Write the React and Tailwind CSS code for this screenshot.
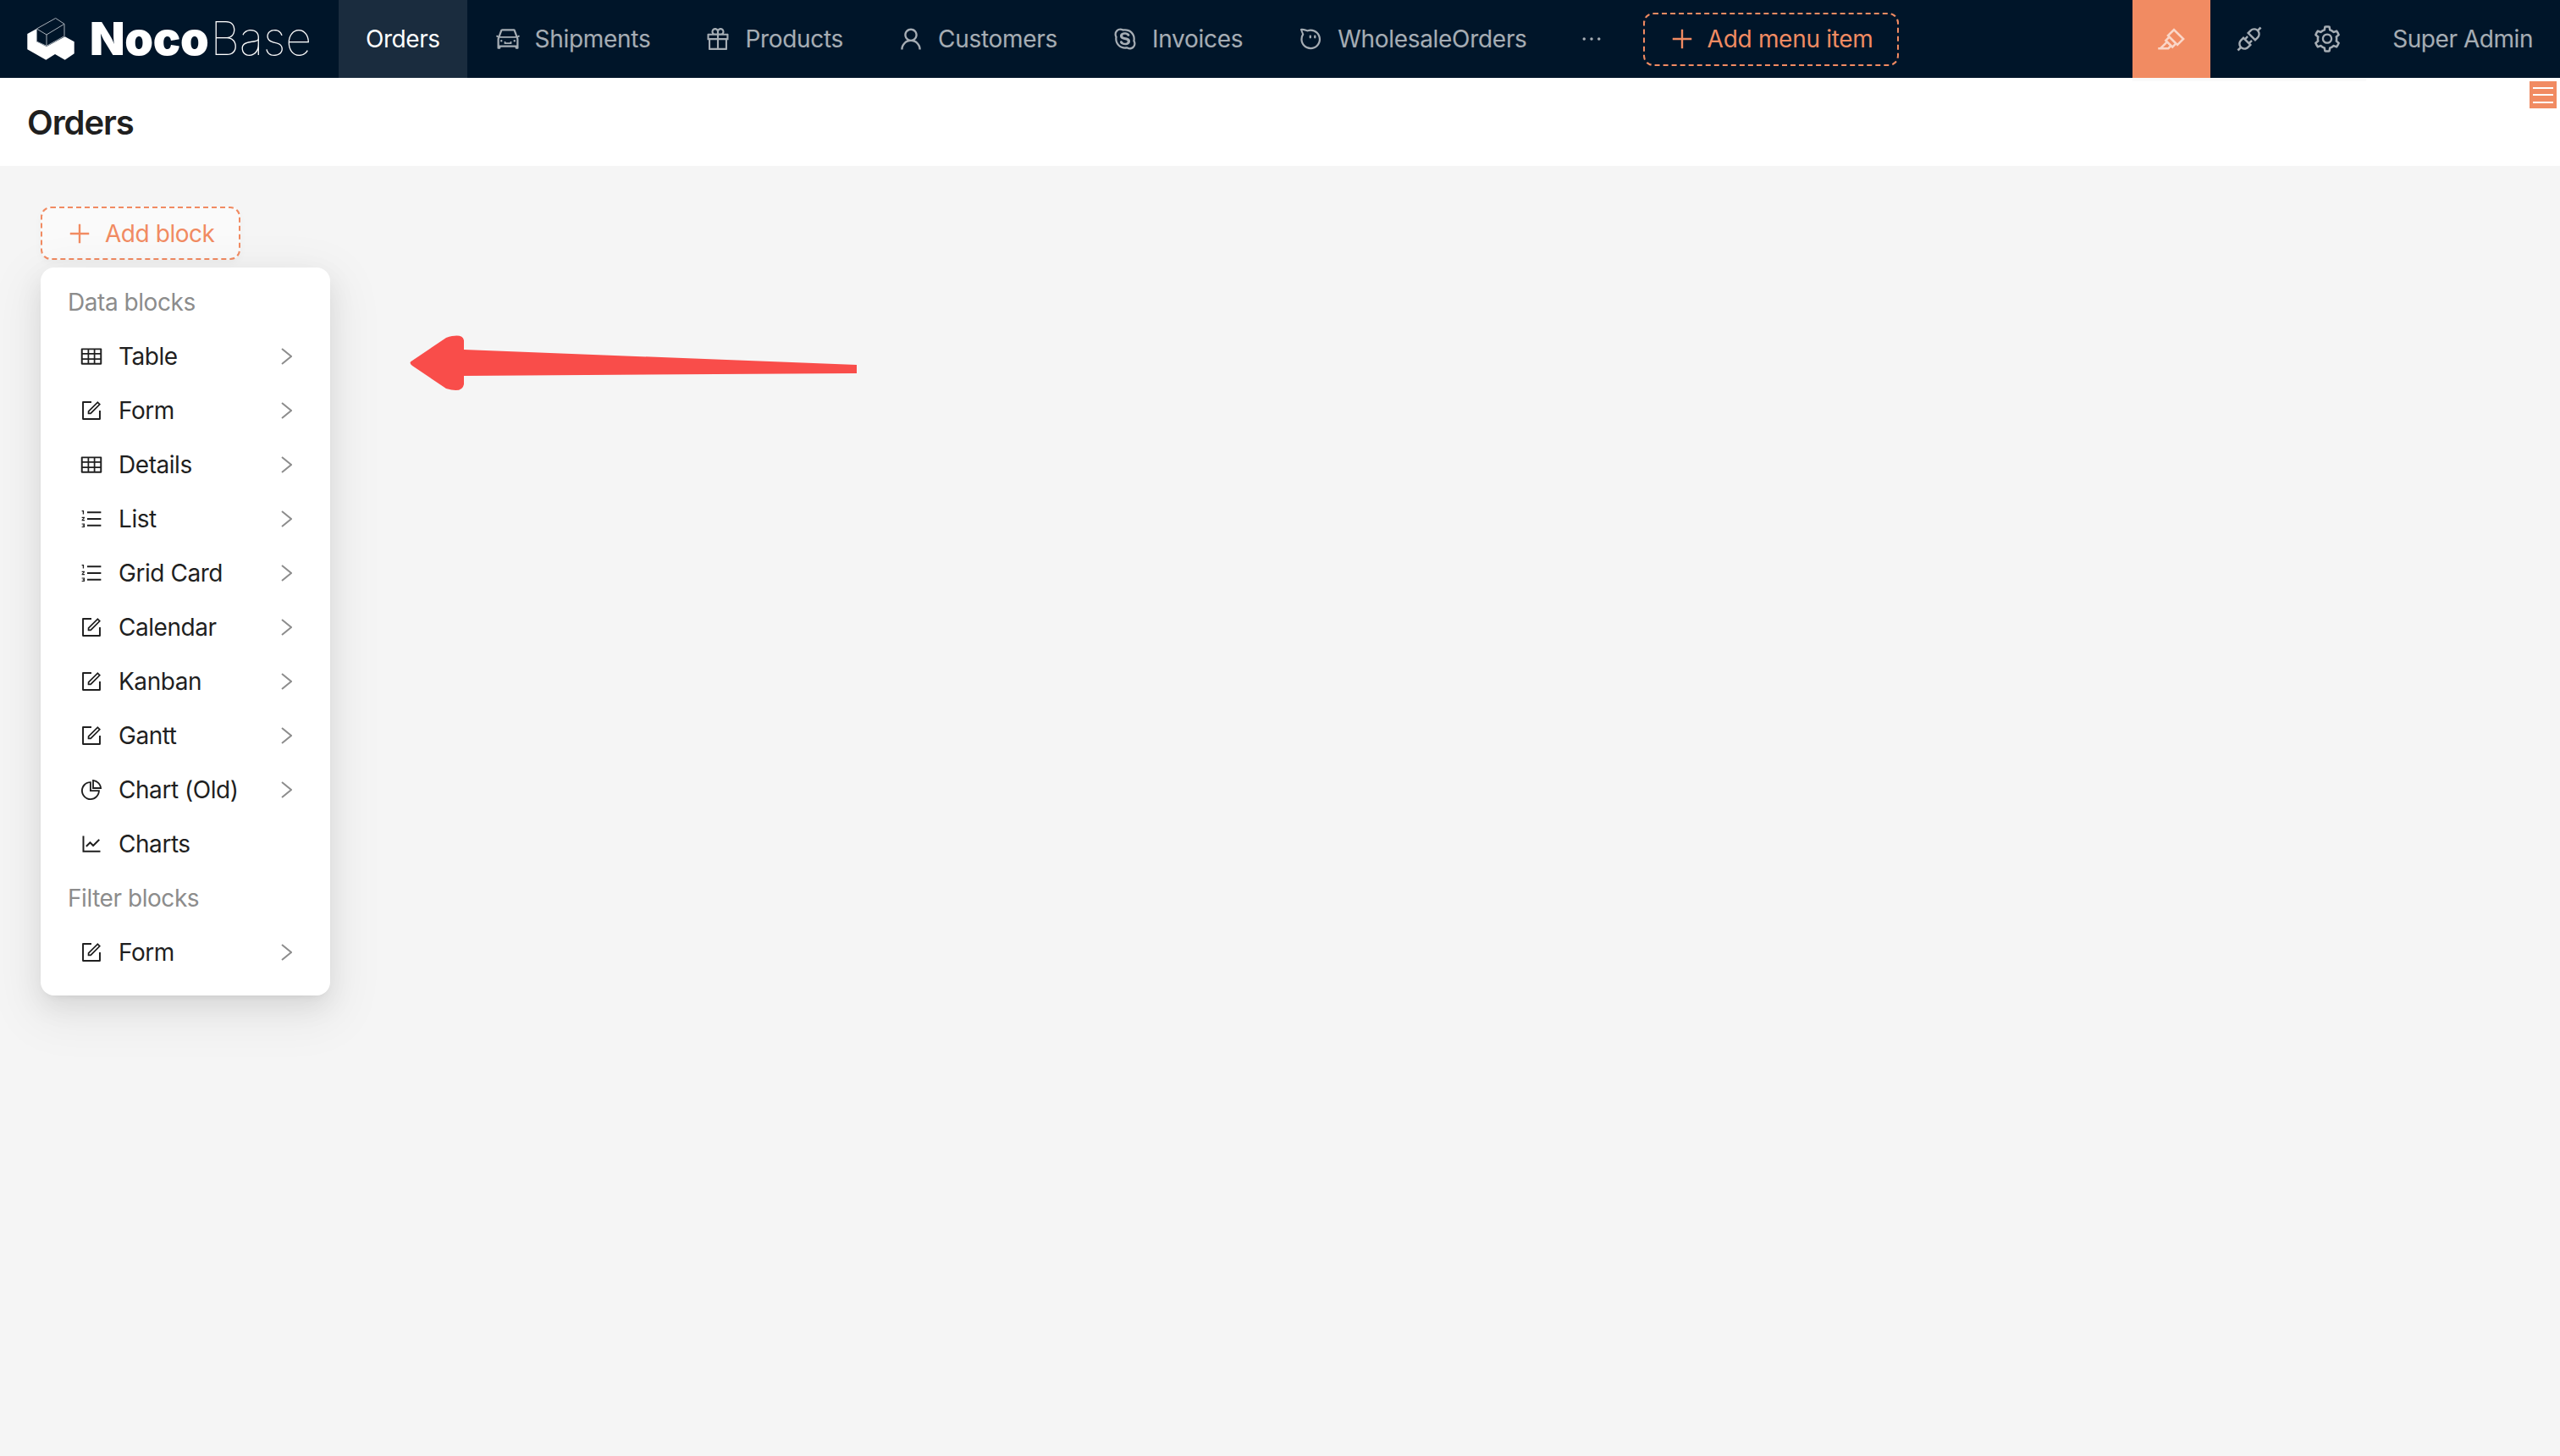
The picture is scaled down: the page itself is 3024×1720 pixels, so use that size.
import {
  AiOutlineApi,
  AiOutlineAliwangwang,
  AiOutlineCar,
  AiOutlineEllipsis,
  AiOutlineForm,
  AiOutlineGift,
  AiOutlineHighlight,
  AiOutlineLineChart,
  AiOutlineOrderedList,
  AiOutlinePieChart,
  AiOutlinePlus,
  AiOutlineSetting,
  AiOutlineSkype,
  AiOutlineTable,
  AiOutlineUser,
} from "react-icons/ai";

const navItems = [
  { label: "Shipments", icon: AiOutlineCar },
  { label: "Products", icon: AiOutlineGift },
  { label: "Customers", icon: AiOutlineUser },
  { label: "Invoices", icon: AiOutlineSkype },
  { label: "WholesaleOrders", icon: AiOutlineAliwangwang },
];

const dataBlocks = [
  { label: "Table", icon: AiOutlineTable, arrow: true },
  { label: "Form", icon: AiOutlineForm, arrow: true },
  { label: "Details", icon: AiOutlineTable, arrow: true },
  { label: "List", icon: AiOutlineOrderedList, arrow: true },
  { label: "Grid Card", icon: AiOutlineOrderedList, arrow: true },
  { label: "Calendar", icon: AiOutlineForm, arrow: true },
  { label: "Kanban", icon: AiOutlineForm, arrow: true },
  { label: "Gantt", icon: AiOutlineForm, arrow: true },
  { label: "Chart (Old)", icon: AiOutlinePieChart, arrow: true },
  { label: "Charts", icon: AiOutlineLineChart, arrow: false },
];

function Logo() {
  return (
    <div className="flex items-center w-[400px] pl-8 shrink-0">
      <svg width="56" height="50" viewBox="0 0 56 50" className="shrink-0">
        <path
          d="M0.3 19 L11.3 13 L11.3 28 L23 34 L44.7 22.3 L55.7 28.3 L55.7 42.3 L44.7 49.7 L33 43 L22.3 49.7 L0.3 37.3 Z"
          fill="#fff"
        />
        <path
          d="M11.3 13 L33.7 0.5 L44 7.3 L44 21.7 L23 33.3 L23 20 L11.3 13 L11.3 28 L23 33.3 M23 20 L44 7.3"
          fill="#001529"
          stroke="#a8b0b8"
          strokeWidth="1"
        />
      </svg>
      <div className="ml-[18px] flex items-baseline text-[54px] leading-none text-white">
        <span className="font-black">Noco</span>
        <span className="ml-[2px] font-thin tracking-[-0.25px]">Base</span>
      </div>
    </div>
  );
}

function TopBar() {
  return (
    <header className="flex items-center h-[92px] bg-[#001529] text-[28px] tracking-[-0.3px] text-white/65 shrink-0">
      <Logo />
      <div className="flex items-center h-full px-8 bg-[#1a2c3e] text-white tracking-[-0.45px]">Orders</div>
      {navItems.map(item => {
        const Icon = item.icon;
        return (
          <div key={item.label} className="flex items-center h-full px-8 gap-4">
            <Icon size={32} />
            <span>{item.label}</span>
          </div>
        );
      })}
      <div className="flex items-center h-full pl-7 pr-8">
        <AiOutlineEllipsis size={32} />
      </div>
      <button className="flex items-center h-[63px] ml-[13px] pl-7 pr-7 gap-[14px] border-2 border-dashed border-[#f18b62] rounded-xl text-[#f18b62]">
        <AiOutlinePlus size={32} />
        Add menu item
      </button>
      <div className="flex items-center h-full ml-auto">
        <div className="flex items-center justify-center w-[92px] h-full bg-[#f18b62] text-white/65">
          <AiOutlineHighlight size={36} />
        </div>
        <div className="flex items-center justify-center w-[92px] h-full">
          <AiOutlineApi size={36} />
        </div>
        <div className="flex items-center justify-center w-[92px] h-full">
          <AiOutlineSetting size={36} />
        </div>
        <span className="pl-[31px] pr-8 tracking-[-0.45px]">Super Admin</span>
      </div>
    </header>
  );
}

function GroupTitle({ children }) {
  return <div className="flex items-center h-16 pl-8 text-[#8c8c8c]">{children}</div>;
}

function MenuRow({ item }) {
  const Icon = item.icon;
  return (
    <div className="flex items-center h-16 pl-[46px] pr-[45px] gap-[18px] text-[#1f1f1f]">
      <Icon size={28} />
      <span>{item.label}</span>
      {item.arrow && (
        <svg width="13" height="20" viewBox="0 0 13 20" className="ml-auto" fill="none" stroke="#8c8c8c" strokeWidth="2">
          <path d="M1 1 L12 10 L1 19" />
        </svg>
      )}
    </div>
  );
}

export default function App() {
  return (
    <div className="relative flex flex-col min-h-screen bg-[#f5f5f5] font-['Inter',sans-serif] antialiased">
      <TopBar />
      <div className="flex items-center h-[104px] px-8 pt-[2px] bg-white shrink-0">
        <h1 className="text-[40px] tracking-[-1.1px] font-semibold text-[#1f1f1f]">Orders</h1>
      </div>
      <main className="flex flex-col items-start pt-12 pl-12 text-[28px] tracking-[-0.45px]">
        <button className="flex items-center h-[63px] pl-7 pr-7 gap-[14px] border-2 border-dashed border-[#f18b62] rounded-xl bg-[#fafafa] text-[#f18b62] shadow-[0_4px_8px_rgba(0,0,0,0.03)]">
          <AiOutlinePlus size={32} />
          Add block
        </button>
        <div className="w-[342px] mt-[9px] pt-[9px] pb-[19px] rounded-2xl bg-white shadow-[0_12px_32px_0_rgba(0,0,0,0.08),0_6px_12px_-8px_rgba(0,0,0,0.12),0_18px_56px_16px_rgba(0,0,0,0.05)]">
          <GroupTitle>Data blocks</GroupTitle>
          {dataBlocks.map(item => (
            <MenuRow key={item.label} item={item} />
          ))}
          <GroupTitle>Filter blocks</GroupTitle>
          <MenuRow item={{ label: "Form", icon: AiOutlineForm, arrow: true }} />
        </div>
      </main>

      {/* strip under the design tools */}
      <div className="absolute top-[92px] left-[2519px] w-[276px] h-1 bg-[#fafafa]" />

      {/* page settings toggle */}
      <div className="absolute top-24 right-1 flex flex-col justify-center gap-[6.5px] w-8 h-8 px-1 bg-[#f18b62]">
        <div className="h-[2px] bg-white" />
        <div className="h-[2px] bg-white" />
        <div className="h-[2px] bg-white" />
      </div>

      {/* annotation arrow */}
      <svg className="absolute left-[480px] top-[390px]" width="540" height="76" viewBox="0 0 540 76">
        <path
          d="M7 36 Q2 38 7 42 L47 69 Q66 75 68 64 L68 54 L532 51 L532 41 L68 23 L68 12 Q66 3 47 9 Z"
          fill="#f94d4a"
        />
      </svg>
    </div>
  );
}
